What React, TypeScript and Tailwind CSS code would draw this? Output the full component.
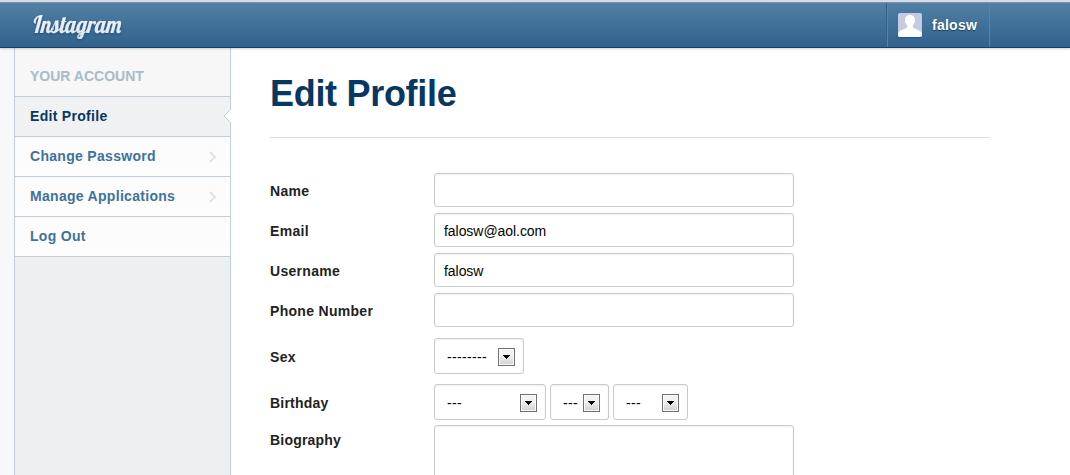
interface NavItem {
  label: string
  active?: boolean
  chevron?: boolean
}

interface FieldRowProps {
  label: string
  value: string
}

interface SelectBoxProps {
  value: string
  className: string
}

const navItems: NavItem[] = [
  { label: 'Edit Profile', active: true },
  { label: 'Change Password', chevron: true },
  { label: 'Manage Applications', chevron: true },
  { label: 'Log Out' },
]

const textFields: FieldRowProps[] = [
  { label: 'Name', value: '' },
  { label: 'Email', value: 'falosw@aol.com' },
  { label: 'Username', value: 'falosw' },
  { label: 'Phone Number', value: '' },
]

function Logo() {
  return (
    <svg
      width="110"
      height="44"
      viewBox="0 0 110 44"
      className="ml-5 overflow-visible [filter:drop-shadow(0_1px_1px_#1c486f)]"
      aria-label="Instagram"
    >
      <defs>
        <linearGradient id="logoFill" x1="0" y1="0" x2="0" y2="1">
          <stop offset="0" stopColor="#ffffff" />
          <stop offset="1" stopColor="#d3dfe9" />
        </linearGradient>
      </defs>
      <text
        x="11"
        y="30.500"
        fontSize="24"
        fontStyle="italic"
        fontFamily="'Brush Script MT', 'Lobster', Lato, cursive"
        textLength="88"
        lengthAdjust="spacingAndGlyphs"
        transform="translate(5.500 0) skewX(8) translate(-8 0)"
        fill="url(#logoFill)"
        stroke="#e9f0f5"
        strokeWidth="0.2"
      >
        Instagram
      </text>
    </svg>
  )
}

function Avatar() {
  return (
    <svg width="24" height="24" viewBox="0 0 24 24" className="rounded-[2px] shadow-[0_1px_1px_#24557f]">
      <rect width="24" height="24" fill="#c5cce2" />
      <path
        d="M12 2C8.700 2 7 4.200 7 7.200c0 2 .8 3.500 2 4.500 .4.8.3 2.300-.2 3.100C7 16.600 2.200 16.200 0 20.500V24h24v-3.500c-2.200-4.300-7-3.900-8.800-5.700-.5-.8-.6-2.300-.2-3.100 1.200-1 2-2.500 2-4.500C17 4.200 15.300 2 12 2z"
        fill="#fff"
      />
    </svg>
  )
}

function Header() {
  return (
    <header className="h-12 border-t-2 border-[#d0dbeb] relative z-10 shadow-[0_1px_2px_rgba(0,0,0,0.2)]">
      <div className="h-[46px] flex justify-between border-t border-t-[#8b8f96] border-b border-b-[#193f66] bg-linear-to-b from-[#5180a5] to-[#30628c]">
        <Logo />
        <div className="flex items-center w-[103px] mr-20 pl-[10px] gap-[10px] border-x border-[#5685a9] shadow-[-1px_0_0_#315f87]">
          <Avatar />
          <span className="text-sm font-bold text-white tracking-[0.25px] [text-shadow:0_1px_1px_#173d60]">falosw</span>
        </div>
      </div>
    </header>
  )
}

function Sidebar() {
  return (
    <aside className="w-[217px] shrink-0 border-x border-[#c1ced9] bg-[#ecf0f3]">
      <h2 className="h-[49px] pt-2 pl-[15px] flex items-center border-b border-[#c1ced9] bg-[#f7f7f7] text-sm font-bold text-[#a5bccd]">
        YOUR ACCOUNT
      </h2>
      <ul>
        {navItems.map((item) => (
          <li
            key={item.label}
            className={`relative h-10 pl-[15px] pr-[13px] pb-[2px] flex items-center justify-between border-b border-[#c1ced9] text-sm font-bold tracking-[0.3px] ${
              item.active
                ? 'bg-[#eff1f3] text-[#073763]'
                : 'bg-linear-to-b from-[#fbfbfb] to-[#fdfdfd] text-[#3f729b]'
            }`}
          >
            {item.label}
            {item.chevron && (
              <svg width="8" height="12" viewBox="0 0 8 12" className="mt-[3px]">
                <path d="M1 1l5 5-5 5" fill="none" stroke="#dfe1e6" strokeWidth="2" />
              </svg>
            )}
            {item.active && (
              <svg width="8" height="14" viewBox="0 0 8 14" className="absolute -right-px top-[12px]">
                <path d="M8 0L1 7l7 7z" fill="#fff" />
                <path d="M7.500.5L1 7l6.500 6.500" fill="none" stroke="#c1ced9" />
              </svg>
            )}
          </li>
        ))}
      </ul>
    </aside>
  )
}

function FieldRow({ label, value }: FieldRowProps) {
  return (
    <div className="flex items-center h-[34px] mb-[6px]">
      <label className="w-[164px] pt-[2px] text-sm font-bold tracking-[0.3px]">{label}</label>
      <input
        type="text"
        defaultValue={value}
        className="w-[360px] h-[34px] px-[9px] pt-[2px] text-sm tracking-[-0.05px] text-black bg-white border border-[#c9caca] rounded-[3px] shadow-[inset_0_1px_2px_rgba(0,0,0,0.06)]"
      />
    </div>
  )
}

function SelectBox({ value, className }: SelectBoxProps) {
  return (
    <div
      className={`h-9 pl-3 pr-2 flex items-center justify-between text-sm text-black bg-white border border-[#c9caca] rounded-[3px] shadow-[inset_0_1px_2px_rgba(0,0,0,0.06)] ${className}`}
    >
      <span className="pt-[2px] tracking-[0.34px]">{value}</span>
      <span className="w-[17px] h-[18px] mt-[2px] flex items-center justify-center border border-[#707070] bg-linear-to-b from-[#f2f2f2] from-40% to-[#cfcfcf] shadow-[inset_0_0_0_1px_#fafafa]">
        <svg width="7" height="4" viewBox="0 0 7 4" shapeRendering="crispEdges">
          <path d="M0 0h7v1H6v1H5v1H4v1H3V3H2V2H1V1H0z" fill="#000" />
        </svg>
      </span>
    </div>
  )
}

export default function App() {
  return (
    <div className="h-[475px] flex flex-col overflow-hidden bg-white text-[#222] font-['Liberation_Sans',Arial,sans-serif]">
      <Header />
      <div className="flex flex-1 min-h-0">
        <div className="w-[14px] shrink-0 bg-[#f6f8f9]" />
        <Sidebar />
        <main className="w-[720px] ml-[39px]">
          <h1 className="h-[90px] pt-[26px] text-4xl leading-[40px] font-bold tracking-[-0.3px] text-[#073763] border-b border-[#dbdcdd]">
            Edit Profile
          </h1>
          <form className="pt-[35px]">
            {textFields.map((field) => (
              <FieldRow key={field.label} label={field.label} value={field.value} />
            ))}
            <div className="flex items-center mt-[11px] mb-[10px]">
              <label className="w-[164px] pt-[2px] text-sm font-bold tracking-[0.3px]">Sex</label>
              <SelectBox value="--------" className="w-[90px]" />
            </div>
            <div className="flex items-center mb-[5px]">
              <label className="w-[164px] pt-[2px] text-sm font-bold tracking-[0.2px]">Birthday</label>
              <div className="flex gap-1">
                <SelectBox value="---" className="w-[112px]" />
                <SelectBox value="---" className="w-[59px]" />
                <SelectBox value="---" className="w-[75px]" />
              </div>
            </div>
            <div className="flex items-start">
              <label className="w-[164px] pt-[5px] text-sm font-bold tracking-[0.2px]">Biography</label>
              <textarea className="w-[360px] h-20 resize-none bg-white border border-[#c9caca] rounded-[3px] shadow-[inset_0_1px_2px_rgba(0,0,0,0.06)]" />
            </div>
          </form>
        </main>
      </div>
    </div>
  )
}
